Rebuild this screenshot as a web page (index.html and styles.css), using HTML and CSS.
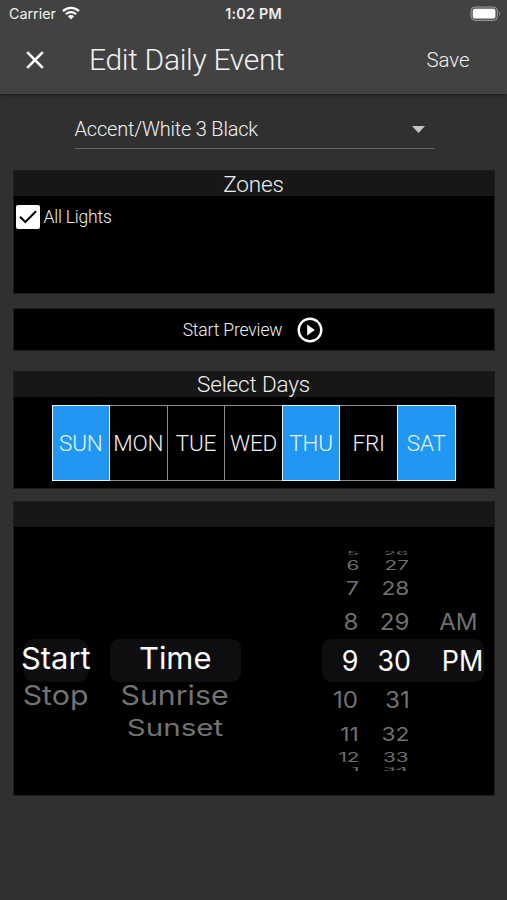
FILE: index.html
```html
<!DOCTYPE html>
<html lang="en">
<head>
<meta charset="utf-8">
<title>Edit Daily Event</title>
<link rel="stylesheet" href="styles.css">
</head>
<body>
<header class="header">
  <div class="status">
    <div class="carrier"><span class="carrier-name">Carrier</span>
      <svg class="wifi" viewBox="0 0 18 14" width="18" height="14"><path d="M1 5.2a11.5 11.5 0 0 1 16 0" /><path d="M3.9 8.2a7.3 7.3 0 0 1 10.2 0"/><path class="solid" d="M9 13.4 5.9 10.3a4.4 4.4 0 0 1 6.2 0Z"/></svg>
    </div>
    <div class="clock"><span>1:02 PM</span></div>
    <svg class="battery" viewBox="0 0 31 16" width="31" height="16"><rect x="1" y="1" width="26.5" height="13.4" rx="4"/><rect class="level" x="2.8" y="2.8" width="22.6" height="9.8" rx="2"/><path class="tip" d="M29 5.4q2 2.3 0 4.6Z"/></svg>
  </div>
  <div class="toolbar">
    <svg class="close" viewBox="0 0 18 18" width="18" height="18"><path d="M1.2 1.2 16.8 16.8M16.8 1.2 1.2 16.8"/></svg>
    <h1 class="title">Edit Daily Event</h1>
    <span class="save">Save</span>
  </div>
</header>
<main class="content">
  <div class="select"><span>Accent/White 3 Black</span>
    <svg viewBox="0 0 13 7" width="13" height="7"><path d="M0 0h13L6.5 7Z" fill="#c6c6c6"/></svg>
  </div>
  <section class="panel zones">
    <h2 class="panel-head">Zones</h2>
    <div class="check-row">
      <svg class="checkbox" viewBox="0 0 24 24" width="24" height="24"><rect width="24" height="24" rx="2" fill="#fff"/><path d="M4 11.8 9.3 17 20 6.3" fill="none" stroke="#000" stroke-width="2"/></svg>
      <span>All Lights</span>
    </div>
  </section>
  <section class="panel preview"><span>Start Preview</span>
    <svg viewBox="0 0 26 26" width="26" height="26"><circle cx="13" cy="13" r="11.3" fill="none" stroke="#fff" stroke-width="2.4"/><path d="M10.2 7.4v11.2L17.8 13Z" fill="#fff"/></svg>
  </section>
  <section class="panel days">
    <h2 class="panel-head">Select Days</h2>
    <div class="day-row">
      <div class="day on">SUN</div><div class="day">MON</div><div class="day">TUE</div><div class="day">WED</div><div class="day on">THU</div><div class="day">FRI</div><div class="day on">SAT</div>
    </div>
  </section>
  <section class="panel pickers">
    <div class="panel-head"></div>
    <div class="wheels">
      <div class="wheel action">
        <div class="opt now"><span>Start</span></div>
        <div class="opt near"><span>Stop</span></div>
      </div>
      <div class="wheel kind">
        <div class="opt now"><span>Time</span></div>
        <div class="opt near"><span>Sunrise</span></div>
        <div class="opt far"><span>Sunset</span></div>
      </div>
      <div class="time">
        <div class="wheel hours">
          <div class="row d4"><span>5</span></div><div class="row d3"><span>6</span></div><div class="row d2"><span>7</span></div><div class="row d1"><span>8</span></div>
          <div class="row d0"><span>9</span></div>
          <div class="row d1"><span>10</span></div><div class="row d2"><span>11</span></div><div class="row d3"><span>12</span></div><div class="row d4"><span>1</span></div>
        </div>
        <div class="wheel minutes">
          <div class="row d4"><span>26</span></div><div class="row d3"><span>27</span></div><div class="row d2"><span>28</span></div><div class="row d1"><span>29</span></div>
          <div class="row d0"><span>30</span></div>
          <div class="row d1"><span>31</span></div><div class="row d2"><span>32</span></div><div class="row d3"><span>33</span></div><div class="row d4"><span>34</span></div>
        </div>
        <div class="wheel meridiem">
          <div class="row d1"><span>AM</span></div>
          <div class="row d0"><span>PM</span></div>
        </div>
      </div>
    </div>
  </section>
</main>
</body>
</html>
```
FILE: styles.css
```css
* { box-sizing: border-box; }
body {
  margin: 0;
  height: 900px;
  overflow: hidden;
  background: #303030;
  color: #f0f0f0;
  font-family: Roboto, sans-serif;
  font-weight: 300;
}
svg { display: block; flex: none; }
h1, h2 { margin: 0; font-weight: 300; }
span { white-space: nowrap; }

.header {
  height: 94px;
  background: #424242;
  box-shadow: 0 1px 5px rgba(0, 0, 0, .5);
}
.status {
  display: grid;
  grid-template-columns: 1fr 80px 1fr;
  align-items: center;
  height: 27px;
  padding: 0 6px 0 9px;
  font-family: Inter, sans-serif;
}
.carrier { display: flex; align-items: center; gap: 6px; font-size: 14.3px; font-weight: 400; }
.wifi { margin-top: -2px; fill: none; stroke: #fff; stroke-width: 2.3; }
.wifi .solid { fill: #fff; stroke: none; }
.clock { margin-left: -3px; text-align: center; font-size: 14.3px; font-weight: 600; color: #f0f0f0; letter-spacing: .25px; }
.battery { justify-self: end; fill: #555; stroke: #999; stroke-width: 1; }
.battery .level { fill: #fff; stroke: none; }
.battery .tip { fill: #999; stroke: none; }
.toolbar { display: flex; align-items: center; height: 66px; padding: 0 37.5px 0 26px; }
.close { fill: none; stroke: #fff; stroke-width: 2.6; }
.title { flex: 1; margin: -1px 0 0 45px; font-size: 30px; line-height: 40px; letter-spacing: -.32px; }
.save { font-size: 20.5px; letter-spacing: -.1px; }

.content { padding: 0 12.5px; }
.select {
  display: flex;
  align-items: center;
  justify-content: space-between;
  width: 359px;
  height: 39px;
  margin: 16px 0 21px 62px;
  padding-right: 9px;
  border-bottom: 1px solid #686868;
  font-size: 20px;
  letter-spacing: -.2px;
}
.panel { background: #000; border: 1px solid #1c1c1c; }
.panel-head {
  height: 25px;
  background: #171717;
  text-align: center;
  font-size: 22.5px;
  line-height: 25px;
  letter-spacing: -.15px;
}
.zones .panel-head { line-height: 27px; }
.zones { height: 124px; }
.check-row { display: flex; align-items: center; gap: 3.5px; padding: 8.5px 0 0 2.5px; font-size: 17.5px; letter-spacing: -.2px; }
.preview {
  display: flex;
  align-items: center;
  justify-content: center;
  gap: 15px;
  height: 43px;
  margin-top: 14px;
  padding-right: 1px;
  font-size: 17.5px;
  letter-spacing: -.15px;
}
.days { height: 118px; margin-top: 20px; }
.day-row { display: flex; width: 404px; height: 76px; margin: 7.5px auto 0; }
.day {
  position: relative;
  display: flex;
  flex: 1;
  align-items: center;
  justify-content: center;
  margin-right: -1px;
  border: 1px solid #8d8d8d;
  font-size: 22.5px;
  letter-spacing: -.2px;
}
.day:last-child { margin-right: 0; }
.day.on { z-index: 1; background: #2196f3; border-color: #e4f3ff; color: #e0f6ff; }

.pickers { height: 295px; margin-top: 12px; }
.pickers .panel-head { height: 24.5px; }
.wheels { display: flex; align-items: flex-start; font-family: Inter, sans-serif; font-weight: 400; }
.opt { display: flex; align-items: center; justify-content: center; color: #727272; font-size: 30px; }
.opt.now { height: 43px; padding-bottom: 5px; border-radius: 9px; background: #0e0e10; color: #fff; }
.opt.near { height: 27px; }
.opt.far { height: 38px; }
.action { width: 64px; margin: 112px 0 0 10px; }
.kind { width: 131px; margin: 112px 0 0 22px; }
.now span { transform: scaleX(1.03); }
.near span { transform: scale(1.01, .9); }
.far span { transform: scale(.985, .75); }

.time {
  position: relative;
  display: flex;
  width: 162px;
  height: 224.8px;
  margin: 22.2px 0 0 81px;
}
.time::before {
  content: "";
  position: absolute;
  inset: 90.3px 0 91.5px;
  border-radius: 9px;
  background: #0e0e10;
}
.time .wheel { position: relative; }
.row { display: flex; align-items: center; justify-content: flex-end; color: #707070; font-size: 28px; line-height: 0; }
.row span { transform-origin: right center; }
.d0 { height: 42px; color: #fff; }
.d1 { height: 36px; }
.d2 { height: 31.2px; }
.d3 { height: 16.2px; }
.d4 { height: 8px; }
.d0 span { transform: scaleX(.96); }
.d1 span { transform: scale(.86, .81); }
.d2 span { transform: scale(.81, .69); }
.d3 span { transform: scale(.74, .45); }
.d4 span { transform: scale(.72, .15); }
.hours { width: 36.5px; }
.hours .d1, .hours .d2 { margin-right: -.5px; }
.hours .d3, .hours .d4 { margin-right: -1px; }
.minutes { width: 52.5px; }
.minutes .d1, .minutes .d2 { padding-right: 1px; }
.minutes .d3, .minutes .d4 { padding-right: 2px; }
.meridiem { width: 72.5px; padding-top: 55.4px; }
.meridiem .d1 { padding-right: 5px; }
```
